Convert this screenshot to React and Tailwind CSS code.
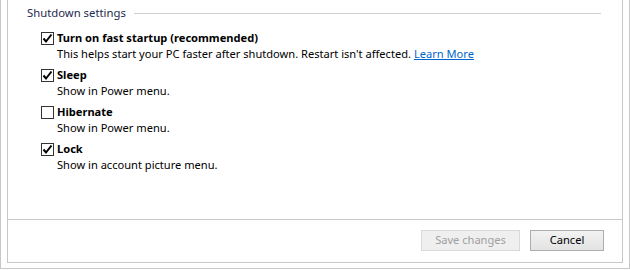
import React from "react";

function Box({ checked }) {
  return (
    <span className="w-[13px] h-[13px] border border-[#333333] bg-white flex items-center justify-center shrink-0">
      {checked && (
        <svg width="11" height="11" viewBox="0 0 11 11">
          <path d="M1.5 5.5 L4 8.5 L9.5 1.5" fill="none" stroke="#000" strokeWidth="2" />
        </svg>
      )}
    </span>
  );
}

function Item({ checked, title, children }) {
  return (
    <div className="flex flex-col mb-[5px]">
      <div className="flex items-center h-[16px]">
        <Box checked={checked} />
        <span className="ml-[3px] font-bold text-[#000]">{title}</span>
      </div>
      <div className="h-[16px] leading-[16px] pl-[16px] text-[#000]">{children}</div>
    </div>
  );
}

export default function App() {
  return (
    <div className="w-[630px] h-[270px] bg-white font-['Noto_Sans',sans-serif] text-[11.1px]">
      <div className="w-[630px] h-[269px] border-x border-b border-[#c8c8c8] px-[6px] pb-[5px] flex flex-col">
        <div className="flex-1 border-x border-b border-[#c8c8c8] flex flex-col">
          <div className="flex-1 pl-[19px] pr-[21px]">
            <div className="flex items-center h-[26px]">
              <span className="text-[#1e2b50] text-[11.3px]">Shutdown settings</span>
              <div className="flex-1 h-px bg-[#d0d0d0] ml-[8px]" />
            </div>
            <div className="pl-[14px] pt-[4px] leading-[16px]">
              <Item checked title="Turn on fast startup (recommended)">
                This helps start your PC faster after shutdown. Restart isn't affected.{" "}
                <a className="text-[#0066cc] underline cursor-pointer">Learn More</a>
              </Item>
              <Item checked title="Sleep">Show in Power menu.</Item>
              <Item title="Hibernate">Show in Power menu.</Item>
              <Item checked title="Lock">Show in account picture menu.</Item>
            </div>
          </div>
          <div className="h-[43px] border-t border-[#c8c8c8] flex items-center justify-end pr-[18px] pb-[1px]">
            <button className="w-[99px] h-[21px] border border-[#d9d9d9] bg-[#efefef] text-[#a0a0a0]">
              Save changes
            </button>
            <button className="ml-[10px] w-[74px] h-[21px] border border-[#adadad] bg-gradient-to-b from-[#f2f2f2] to-[#e3e3e3] text-black">
              Cancel
            </button>
          </div>
        </div>
      </div>
    </div>
  );
}
